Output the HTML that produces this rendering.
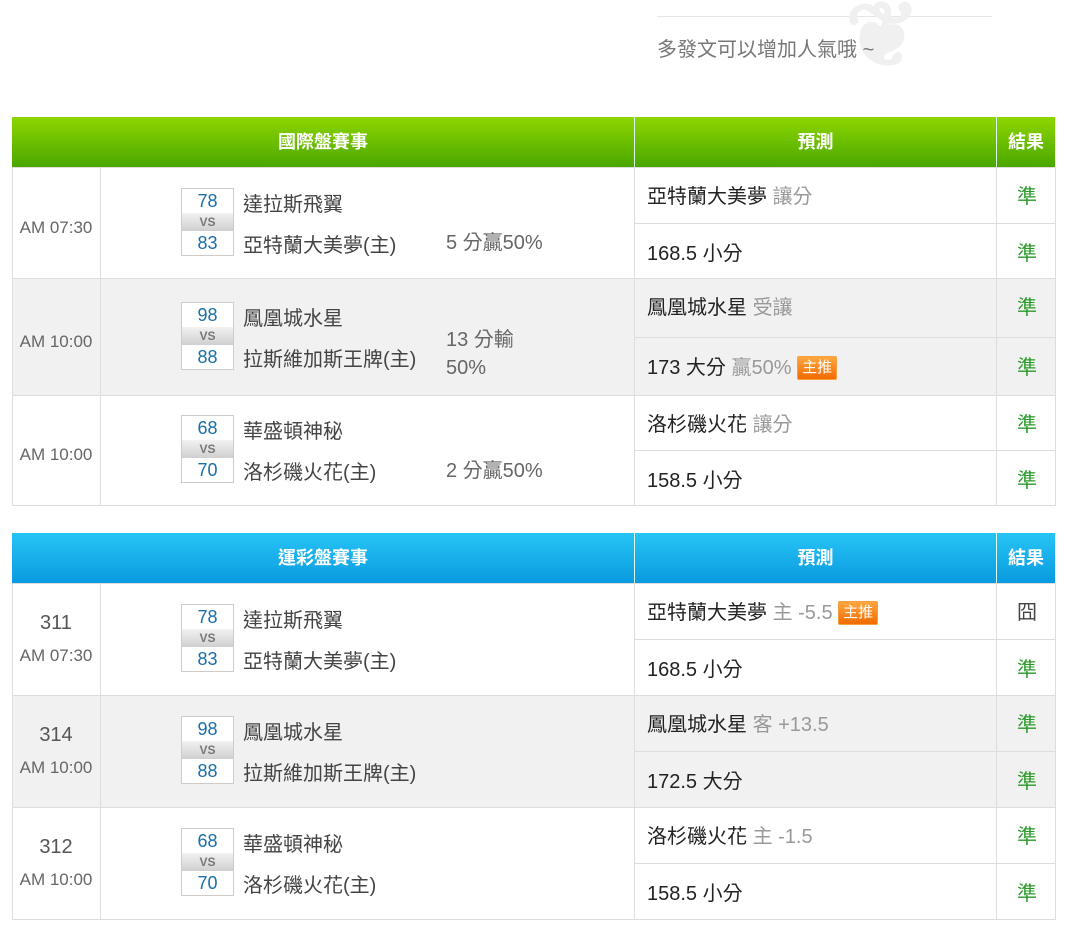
<!DOCTYPE html>
<html><head><meta charset="utf-8"><style>
body{margin:0;width:1080px;height:930px;background:#fff;font-family:"Liberation Sans","Noto Sans CJK TC",sans-serif;position:relative;overflow:hidden}
.a{position:absolute}
.hd{position:absolute;height:50px;color:#fff;font-weight:bold;font-size:18px;line-height:50px;text-align:center;border-right:1px solid #dfe;box-sizing:border-box}
.g{background:linear-gradient(#8ed600,#4aa700)}
.b{background:linear-gradient(#27c4f5,#0a9ae0)}
.cell{position:absolute;border:1px solid #ddd;box-sizing:border-box}
.t{color:#666;font-size:17px}
.sc{position:absolute;left:181px;width:53px;border:1px solid #ccc;box-sizing:border-box;background:#fff}
.sc div{text-align:center;font-size:18px;color:#1a6fa8;height:24px;line-height:24px}
.sc .vs{height:18px;line-height:18px;font-size:12px;font-weight:bold;color:#777;background:linear-gradient(#f2f2f2,#cfcfcf)}
.nm{position:absolute;left:243px;font-size:20px;color:#444}
.pr{position:absolute;left:647px;font-size:20px;color:#222}
.pr span{color:#999}
.pr span.tag{color:#fff}
.ok{position:absolute;left:1017px;font-size:20px;color:#2a9a2a}
.tag{display:inline-block;background:linear-gradient(#ffa640,#f26a00);color:#fff;font-size:15px;padding:0 4px;line-height:22px;border-radius:2px;vertical-align:2px;border:1px solid #f7a040}
</style></head><body>
<div class="a" style="left:657px;top:16px;width:335px;border-top:1px solid #e5e5e5"></div>
<div class="a" style="left:845px;top:-4px;width:140px;height:80px;color:#f0f0f0;font-size:90px;line-height:80px;font-weight:bold">❦</div>
<div class="a" style="left:657px;top:33px;font-size:20px;color:#777">多發文可以增加人氣哦 ~</div>

<div class="hd g" style="left:12px;top:117px;width:623px">國際盤賽事</div>
<div class="hd g" style="left:635px;top:117px;width:362px">預測</div>
<div class="hd g" style="left:997px;top:117px;width:59px">結果</div>

<div class="hd b" style="left:12px;top:533px;width:623px">運彩盤賽事</div>
<div class="hd b" style="left:635px;top:533px;width:362px">預測</div>
<div class="hd b" style="left:997px;top:533px;width:59px">結果</div>

<div id="rows"></div>
<script>
var html='';
function row(top,h,bg,time,num,s1,s2,n1,n2,res,p1,p2,r1,r2){
 html+='<div class="cell" style="left:12px;top:'+top+'px;width:89px;height:'+(h+1)+'px;background:'+bg+'"></div>';
 html+='<div class="cell" style="left:100px;top:'+top+'px;width:535px;height:'+(h+1)+'px;background:'+bg+'"></div>';
 var sh=Math.round(h/2);
 html+='<div class="cell" style="left:634px;top:'+top+'px;width:363px;height:'+(sh+1)+'px;background:'+bg+'"></div>';
 html+='<div class="cell" style="left:634px;top:'+(top+sh)+'px;width:363px;height:'+(h-sh+1)+'px;background:'+bg+'"></div>';
 html+='<div class="cell" style="left:996px;top:'+top+'px;width:60px;height:'+(sh+1)+'px;background:'+bg+'"></div>';
 html+='<div class="cell" style="left:996px;top:'+(top+sh)+'px;width:60px;height:'+(h-sh+1)+'px;background:'+bg+'"></div>';
 var mid=top+h/2;
 if(num){html+='<div class="a" style="left:12px;width:88px;text-align:center;top:'+(mid-27)+'px;font-size:20px;color:#555">'+num+'</div>';
  html+='<div class="a t" style="left:12px;width:88px;text-align:center;top:'+(mid+7)+'px">'+time+'</div>';}
 else html+='<div class="a t" style="left:12px;width:88px;text-align:center;top:'+(mid-5)+'px">'+time+'</div>';
 var st=mid-35;
 html+='<div class="sc" style="top:'+st+'px"><div>'+s1+'</div><div class="vs">VS</div><div>'+s2+'</div></div>';
 html+='<div class="nm" style="top:'+(st+0)+'px">'+n1+'</div><div class="nm" style="top:'+(st+41)+'px">'+n2+'</div>';
 if(res)html+='<div class="a" style="left:446px;top:'+res[0]+'px;font-size:20px;color:#666;line-height:28px">'+res[1]+'</div>';
 html+='<div class="pr" style="top:'+(top+13)+'px">'+p1+'</div>';
 html+='<div class="pr" style="top:'+(top+sh+14)+'px">'+p2+'</div>';
 html+='<div class="ok" style="top:'+(top+13)+'px;color:'+(r1=='囧'?'#444':'#2a9a2a')+'">'+r1+'</div>';
 html+='<div class="ok" style="top:'+(top+sh+14)+'px">'+r2+'</div>';
}
var T='<span class="tag">主推</span>';
row(167,111,'#fff','AM 07:30','','78','83','達拉斯飛翼','亞特蘭大美夢(主)',[229,'5 分贏50%'],'亞特蘭大美夢 <span>讓分</span>','168.5 小分','準','準');
row(278,117,'#f1f1f1','AM 10:00','','98','88','鳳凰城水星','拉斯維加斯王牌(主)',[326,'13 分輸<br>50%'],'鳳凰城水星 <span>受讓</span>','173 大分 <span>贏50%</span> '+T,'準','準');
row(395,110,'#fff','AM 10:00','','68','70','華盛頓神秘','洛杉磯火花(主)',[457,'2 分贏50%'],'洛杉磯火花 <span>讓分</span>','158.5 小分','準','準');
row(583,112,'#fff','AM 07:30','311','78','83','達拉斯飛翼','亞特蘭大美夢(主)',null,'亞特蘭大美夢 <span>主 -5.5</span> '+T,'168.5 小分','囧','準');
row(695,112,'#f1f1f1','AM 10:00','314','98','88','鳳凰城水星','拉斯維加斯王牌(主)',null,'鳳凰城水星 <span>客 +13.5</span>','172.5 大分','準','準');
row(807,112,'#fff','AM 10:00','312','68','70','華盛頓神秘','洛杉磯火花(主)',null,'洛杉磯火花 <span>主 -1.5</span>','158.5 小分','準','準');
document.getElementById('rows').innerHTML=html;
</script>
</body></html>
